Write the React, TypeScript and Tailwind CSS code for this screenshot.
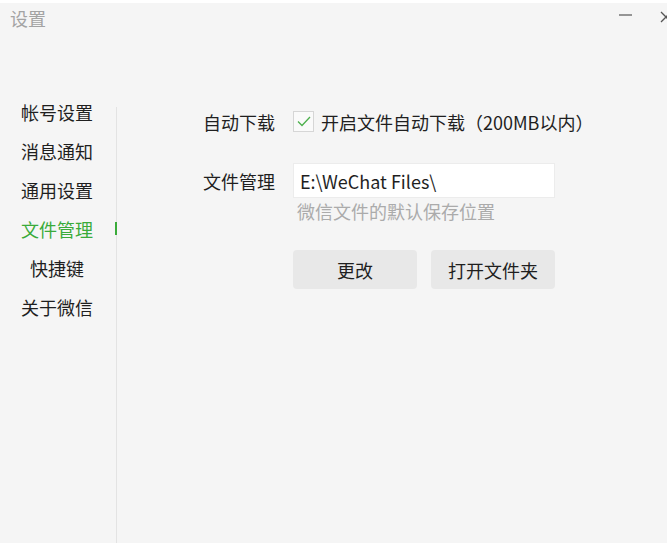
import React from 'react';

const menu = ['帐号设置', '消息通知', '通用设置', '文件管理', '快捷键', '关于微信'];

export default function App() {
  const active = '文件管理';

  return (
    <div className="flex h-[543px] w-[667px] flex-col overflow-hidden border-t-[3px] border-white bg-[#f5f5f5] font-['Noto_Sans_CJK_SC','Noto_Sans',sans-serif] text-[#1f1f1f]">
      {/* title bar */}
      <div className="flex h-[89px] shrink-0 items-start justify-between">
        <div className="pl-[10px] pt-[3px] text-[18px] leading-[24px] text-[#a3a3a3]">设置</div>
        <div className="flex items-center pt-[8px]">
          <svg width="14" height="12" viewBox="0 0 14 12" className="mr-[27px]">
            <line x1="0" y1="4" x2="13" y2="4" stroke="#555" strokeWidth="1.2" />
          </svg>
          <svg width="12" height="12" viewBox="0 0 12 12" className="-mr-[5px]">
            <path d="M1 1 L11 11 M11 1 L1 11" stroke="#555" strokeWidth="1.3" fill="none" />
          </svg>
        </div>
      </div>

      <div className="flex flex-1">
        {/* sidebar */}
        <nav className="flex w-[116px] shrink-0 flex-col">
          {menu.map((item) => (
            <div
              key={item}
              className={`relative flex h-[39px] items-center justify-center pr-[2px] text-[18px] leading-[24px] ${
                item === active ? 'text-[#3aab3a]' : 'text-[#1f1f1f]'
              }`}
            >
              <span className="whitespace-nowrap">{item}</span>
              {item === active && (
                <span className="absolute right-[-1px] top-[13px] h-[13px] w-[2px] bg-[#3aab3a]" />
              )}
            </div>
          ))}
        </nav>
        <div className="mt-[15px] w-px self-stretch bg-[#e3e3e3]" />

        {/* content */}
        <div className="flex flex-col pl-[86px] pt-[19px]">
          <div className="flex h-[21px] items-center">
            <span className="w-[90px] text-[18px] leading-[24px]">自动下载</span>
            <span className="flex h-[21px] w-[21px] items-center justify-center border border-[#d6d6d6] bg-[#fafafa]">
              <svg width="14" height="11" viewBox="0 0 14 11">
                <path d="M1 5.5 L5 9.5 L13 1" stroke="#4cb04c" strokeWidth="1.3" fill="none" />
              </svg>
            </span>
            <span className="ml-[7px] whitespace-nowrap text-[18px] leading-[24px]">开启文件自动下载（200MB以内）</span>
          </div>

          <div className="mt-[31px] flex items-center">
            <span className="w-[90px] text-[18px] leading-[24px]">文件管理</span>
            <div className="flex h-[35px] w-[262px] items-center border border-[#ececec] bg-white pl-[6px] text-[18px] leading-[24px]">
              E:\WeChat Files\
            </div>
          </div>
          <div className="mt-[1px] pl-[94px] text-[18px] leading-[24px] text-[#ababab]">微信文件的默认保存位置</div>

          <div className="mt-[27px] flex gap-[14px] pl-[90px]">
            <button className="h-[39px] w-[124px] rounded-[4px] bg-[#e8e8e8] text-[18px] leading-[24px] text-[#1f1f1f]">
              更改
            </button>
            <button className="h-[39px] w-[124px] rounded-[4px] bg-[#e8e8e8] text-[18px] leading-[24px] text-[#1f1f1f]">
              打开文件夹
            </button>
          </div>
        </div>
      </div>
    </div>
  );
}
